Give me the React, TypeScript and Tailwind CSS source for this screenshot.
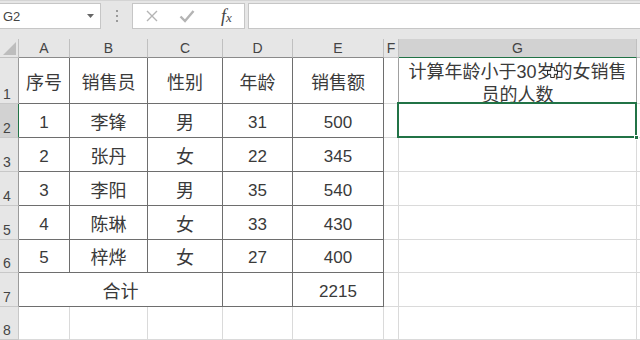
import React from "react";

const DARK = "border-[#6e6e6e]";
const LIGHT = "border-[#dadada]";

const data = [
  ["序号", "销售员", "性别", "年龄", "销售额"],
  ["1", "李锋", "男", "31", "500"],
  ["2", "张丹", "女", "22", "345"],
  ["3", "李阳", "男", "35", "540"],
  ["4", "陈琳", "女", "33", "430"],
  ["5", "梓烨", "女", "27", "400"],
];

const rowHeights = [46, 34, 34, 34, 34, 33, 34];

function RowHead({ n, selected }: { n: number; selected?: boolean }) {
  return (
    <div
      className={`flex items-end pl-[3px] pb-[1px] text-[14px] leading-[16px] text-[#444] border-b border-b-[#c8c8c8] border-r ${
        selected ? "bg-[#d2d2d2] border-r-[#217346]" : n <= 7 ? "bg-[#e6e6e6] border-r-[#9a9a9a]" : "bg-[#e6e6e6] border-r-[#c8c8c8]"
      }`}
    >
      {n}
    </div>
  );
}

function Cell({ v, span }: { v: string; span?: boolean }) {
  const isNum = /^[0-9]+$/.test(v);
  return (
    <div
      className={`flex items-center justify-center pt-[4px] border-r border-b ${DARK} ${span ? "col-span-3" : ""} ${
        isNum ? "text-[17px]" : "text-[18px]"
      } leading-[22px] text-[#3a3a3a] whitespace-nowrap`}
    >
      {v}
    </div>
  );
}

function Light({ extra = "" }: { extra?: string }) {
  return <div className={`border-r border-b ${LIGHT} ${extra}`} />;
}

export default function App() {
  const font = "font-['Liberation_Sans','Noto_Sans_CJK_SC',sans-serif]";
  return (
    <div className={`w-[640px] h-[340px] overflow-hidden bg-white ${font}`}>
      {/* toolbar */}
      <div className="h-[39px] bg-[#e6e6e6] border-t border-[#d4d4d4] flex items-start pt-[2px]">
        <div className="w-[101px] h-[26px] bg-white border border-[#c6c6c6] border-l-0 flex items-center justify-between pl-[3px] pr-[6px]">
          <span className="text-[13px] text-[#444] leading-none">G2</span>
          <svg width="7" height="4" viewBox="0 0 7 4">
            <path d="M0 0 L7 0 L3.5 4 Z" fill="#666" />
          </svg>
        </div>
        <div className="w-[31px] h-[26px] flex flex-col items-center justify-center gap-[3px]">
          <span className="w-[2px] h-[2px] bg-[#9a9a9a]" />
          <span className="w-[2px] h-[2px] bg-[#9a9a9a]" />
          <span className="w-[2px] h-[2px] bg-[#9a9a9a]" />
        </div>
        <div className="w-[113px] h-[26px] bg-white border border-[#c6c6c6] flex items-center">
          <svg width="14" height="14" viewBox="0 0 14 14" className="ml-[12px]">
            <path d="M2 2 L12 12 M12 2 L2 12" stroke="#b4b4b4" strokeWidth="1.4" />
          </svg>
          <svg width="16" height="14" viewBox="0 0 16 14" className="ml-[20px]">
            <path d="M1.5 7.5 L6 12 L14.5 2" stroke="#b4b4b4" strokeWidth="2.4" fill="none" />
          </svg>
          <span className="ml-[26px] text-[18px] italic text-[#444] font-['Liberation_Serif',serif] leading-none">
            f<span className="text-[13px]">x</span>
          </span>
        </div>
        <div className="ml-[3px] flex-1 h-[26px] bg-white border border-[#c6c6c6] border-r-0" />
      </div>

      {/* sheet */}
      <div
        className="grid text-[#3a3a3a]"
        style={{
          gridTemplateColumns: "19px 51px 78px 75px 70px 91px 15px 238px 1fr",
          gridTemplateRows: `19px ${rowHeights.map((h) => h + "px").join(" ")} 1fr`,
          height: 301,
        }}
      >
        {/* header row */}
        <div className="bg-[#e6e6e6] border-r border-b border-[#c0c0c0] relative">
          <svg width="13" height="13" viewBox="0 0 13 13" className="absolute right-[2px] bottom-[2px]">
            <path d="M13 0 L13 13 L0 13 Z" fill="#bdbdbd" />
          </svg>
        </div>
        {["A", "B", "C", "D", "E"].map((c) => (
          <div
            key={c}
            className="bg-[#e6e6e6] border-r border-r-[#c0c0c0] border-b border-b-[#8a8a8a] flex items-center justify-center text-[14px] text-[#444] leading-none"
          >
            {c}
          </div>
        ))}
        <div className="bg-[#e6e6e6] border-r border-r-[#c0c0c0] border-b border-b-[#c0c0c0] flex items-center justify-center text-[14px] text-[#444] leading-none">
          F
        </div>
        <div className="bg-[#d2d2d2] border-r border-r-[#c0c0c0] border-b border-b-[#217346] flex items-center justify-center text-[14px] text-[#444] leading-none">
          G
        </div>
        <div className="bg-[#e6e6e6] border-b border-[#c0c0c0]" />

        {/* rows 1-6 */}
        {data.map((row, i) => (
          <React.Fragment key={i}>
            <RowHead n={i + 1} selected={i === 1} />
            {row.map((v, j) => (
              <Cell key={j} v={v} />
            ))}
            {i === 0 ? (
              <>
                <Light extra="border-r-[#a0a0a0]" />
                <div className="border-r border-b border-[#a0a0a0] flex items-start justify-center text-center text-[18px] leading-[23px] text-[#3a3a3a] relative overflow-hidden">
                  <div className="w-[234px] pt-[3px]">计算年龄小于30岁的女销售员的人数</div>
                  <svg width="11" height="11" viewBox="0 0 12 12" className="absolute left-[148px] top-[9px]">
                    <path d="M4 0.5 H8 V4 H11.5 V8 H8 V11.5 H4 V8 H0.5 V4 H4 Z" fill="white" stroke="#111" strokeWidth="1" />
                  </svg>
                </div>
              </>
            ) : i === 1 ? (
              <>
                <Light />
                <div className="relative border-r border-b border-[#dadada]">
                  <div className="absolute -left-[2px] -top-[2px] -right-[1px] -bottom-[1px] border-2 border-[#217346]" />
                  <div className="absolute -right-[3px] -bottom-[3px] w-[5px] h-[5px] bg-[#217346] border border-white" />
                </div>
              </>
            ) : (
              <>
                <Light />
                <Light />
              </>
            )}
            <div className={`border-b ${LIGHT}`} />
          </React.Fragment>
        ))}

        {/* row 7 */}
        <RowHead n={7} />
        <Cell v="合计" span />
        <Cell v="" />
        <Cell v="2215" />
        <Light />
        <Light />
        <div className={`border-b ${LIGHT}`} />

        {/* row 8 */}
        <RowHead n={8} />
        <Light />
        <Light />
        <Light />
        <Light />
        <Light />
        <Light />
        <Light />
        <div className={`border-b ${LIGHT}`} />
      </div>
    </div>
  );
}
